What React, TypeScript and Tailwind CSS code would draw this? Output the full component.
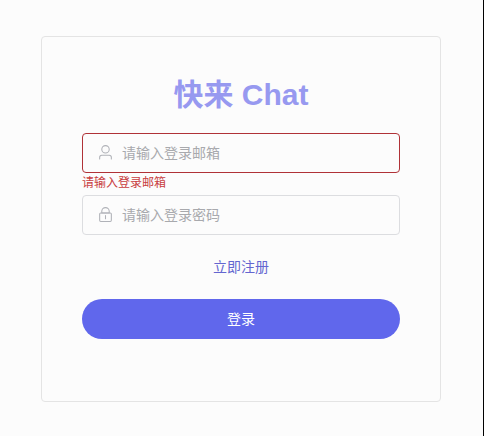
import type { ReactNode } from "react";

function Icon({ children }: { children: ReactNode }) {
  return (
    <svg viewBox="0 0 1024 1024" className="mr-2 mb-[2px] h-[17px] w-[17px] shrink-0 text-[#b0b2b8]" fill="currentColor">
      {children}
    </svg>
  );
}

function Field({ type, placeholder, invalid, children }: { type: string; placeholder: string; invalid?: boolean; children: ReactNode }) {
  return (
    <label className={`flex h-10 items-center rounded border pr-4 pl-[14px] ${invalid ? "border-[#b03237]" : "border-[#dcdde0]"}`}>
      <Icon>{children}</Icon>
      <input type={type} placeholder={placeholder} className="min-w-0 flex-1 bg-transparent text-sm text-[#606266] outline-none placeholder:text-[#a8a9ad]" />
    </label>
  );
}

export default function App() {
  return (
    <main className="h-[436px] w-[484px] border-r border-black bg-[#fcfcfc] pt-9 pl-[41px] font-['Liberation_Sans','Noto_Sans_CJK_SC',sans-serif]">
      <form className="flex h-[366px] w-[400px] flex-col rounded border border-[#e4e4e4] px-10 pt-[38px]">
        <h1 className="h-[58px] text-center text-[30px] leading-[40px] font-bold text-[#9799f0]">快来 Chat</h1>
        <Field type="text" placeholder="请输入登录邮箱" invalid>
          <path d="M512 512a192 192 0 1 0 0-384 192 192 0 0 0 0 384m0 64a256 256 0 1 1 0-512 256 256 0 0 1 0 512m320 320v-96a96 96 0 0 0-96-96H288a96 96 0 0 0-96 96v96a32 32 0 1 1-64 0v-96a160 160 0 0 1 160-160h448a160 160 0 0 1 160 160v96a32 32 0 1 1-64 0" />
        </Field>
        <p className="h-[22px] text-xs leading-[20px] text-[#c83c40]">请输入登录邮箱</p>
        <Field type="password" placeholder="请输入登录密码">
          <path d="M224 448a32 32 0 0 0-32 32v384a32 32 0 0 0 32 32h576a32 32 0 0 0 32-32V480a32 32 0 0 0-32-32zm0-64h576a96 96 0 0 1 96 96v384a96 96 0 0 1-96 96H224a96 96 0 0 1-96-96V480a96 96 0 0 1 96-96" />
          <path d="M512 544a32 32 0 0 1 32 32v192a32 32 0 1 1-64 0V576a32 32 0 0 1 32-32m192-160v-64a192 192 0 1 0-384 0v64zM512 64a256 256 0 0 1 256 256v128H256V320A256 256 0 0 1 512 64" />
        </Field>
        <a href="#" className="mt-[22px] text-center text-sm leading-5 text-[#6466d0]">立即注册</a>
        <button type="button" className="mt-[22px] h-10 rounded-full bg-[#6067ec] text-sm text-white">登录</button>
      </form>
    </main>
  );
}
